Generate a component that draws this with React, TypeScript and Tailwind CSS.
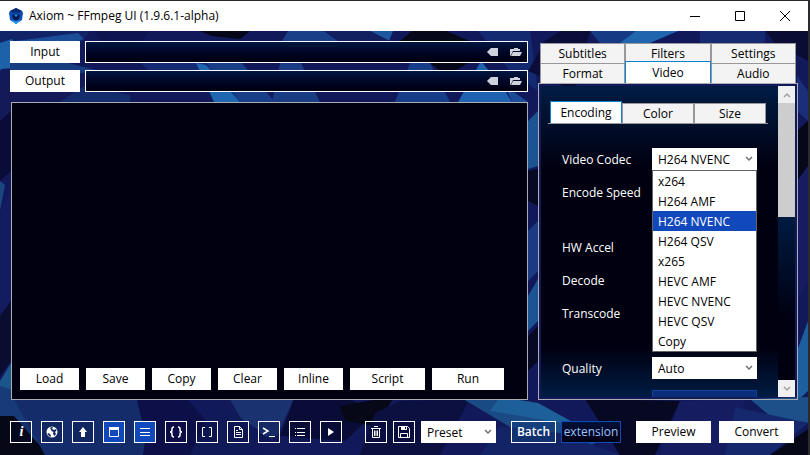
import { useState } from 'react';
import type { ReactNode } from 'react';

const TOP_TABS = ['Subtitles', 'Filters', 'Settings'];
const BOTTOM_TABS = ['Format', 'Video', 'Audio'];
const SUB_TABS = ['Encoding', 'Color', 'Size'];
const CODECS = ['x264', 'H264 AMF', 'H264 NVENC', 'H264 QSV', 'x265', 'HEVC AMF', 'HEVC NVENC', 'HEVC QSV', 'Copy'];

const SCRIPT_BUTTONS = [
  { label: 'Load', width: 'w-[59px]' },
  { label: 'Save', width: 'w-[59px]' },
  { label: 'Copy', width: 'w-[59px]' },
  { label: 'Clear', width: 'w-[59px]' },
  { label: 'Inline', width: 'w-[59px]' },
  { label: 'Script', width: 'w-[75px]' },
  { label: 'Run', width: 'w-[72px]' },
];

// Low-poly wallpaper facets: fill, points
const FACETS: [string, string][] = [
  ['#122468', '0,0 90,0 60,40 0,30'],
  ['#1a4c98', '0,12 78,2 84,8 8,32 0,40'],
  ['#1d62a8', '0,12 12,8 30,36 0,38'],
  ['#173c80', '10,32 60,30 100,40 60,44 10,42'],
  ['#141a58', '0,42 60,40 84,64 130,90 0,150'],
  ['#142c6c', '60,71 84,55 130,64 130,71'],
  ['#0d1450', '95,0 150,0 140,12 100,10'],
  ['#050618', '200,0 250,0 240,8 212,5'],
  ['#132a72', '140,32 200,30 220,40 150,40'],
  ['#1f66b0', '196,32 206,34 240,71 214,71'],
  ['#183e88', '206,32 240,30 275,71 240,71'],
  ['#183f88', '288,0 324,0 338,10 282,10'],
  ['#1e57a0', '370,0 393,0 389,10'],
  ['#193c84', '280,32 300,30 320,71 272,71'],
  ['#122060', '325,0 370,0 390,10 340,10'],
  ['#060718', '412,0 446,0 470,10 400,10'],
  ['#060718', '430,32 468,32 455,40 440,40'],
  ['#173c88', '410,32 430,32 450,71 395,71'],
  ['#1f62b0', '481,30 505,60 512,71 458,71'],
  ['#1c4c98', '505,55 528,71 512,71'],
  ['#132a70', '478,0 530,0 538,60 510,40'],
  ['#0a0d38', '528,40 545,10 560,0 590,0 575,60'],
  ['#173a84', '590,0 640,0 625,12 600,12'],
  ['#2066ae', '636,0 678,0 650,12 620,12'],
  ['#152a70', '700,0 765,0 765,12 700,12'],
  ['#0b0c34', '765,0 808,0 808,30 775,12'],
  ['#1a2f78', '797,45 808,60 808,90 797,80'],
  ['#060718', '797,100 808,90 808,135 797,150'],
  ['#171c60', '797,150 808,135 808,250 797,270'],
  ['#1d5f9e', '797,320 808,290 808,360 797,370'],
  ['#0a0c38', '0,90 11,80 11,140 0,150'],
  ['#1b4680', '0,150 5,154 0,180'],
  ['#141c60', '0,180 11,160 11,290 0,280'],
  ['#0a0c30', '0,285 11,270 11,330 0,345'],
  ['#1b558c', '0,350 11,332 11,390 0,380'],
  ['#1b5490', '528,90 538,80 538,135 528,138'],
  ['#070922', '528,140 538,138 538,175 528,170'],
  ['#1b3a80', '528,200 538,190 538,240 528,250'],
  ['#1b5490', '528,265 538,248 538,290 528,300'],
  ['#070922', '528,305 538,295 538,330 528,340'],
  ['#173a78', '0,355 30,365 55,424 0,385'],
  ['#060818', '0,385 14,385 48,424 0,424'],
  ['#142c6a', '12,365 136,365 146,406 143,424 45,424'],
  ['#0d1048', '136,365 185,365 215,400 190,424 143,424 146,406'],
  ['#1a3270', '228,365 295,365 275,410 245,395'],
  ['#111a58', '215,370 260,400 250,424 190,424'],
  ['#0a0c38', '295,365 345,365 375,382 345,410 280,405'],
  ['#060818', '340,375 395,365 375,395 345,390'],
  ['#121a5c', '275,405 345,410 365,424 260,424'],
  ['#0c1040', '375,382 400,370 470,368 440,424 360,424'],
  ['#1a4a84', '463,368 528,370 600,410 570,424 520,402'],
  ['#1d5f98', '500,366 538,372 580,395 490,380'],
  ['#132466', '500,395 560,402 620,424 480,424'],
  ['#070922', '585,368 680,370 655,424 620,424'],
  ['#151c60', '680,370 745,368 730,424 660,424'],
  ['#1d5088', '750,368 808,366 808,392 770,385'],
  ['#16286c', '735,376 808,392 770,424 725,424'],
  ['#060818', '770,424 808,398 808,424'],
];

function Wallpaper() {
  return (
    <svg
      className="absolute inset-0 h-full w-full"
      viewBox="0 0 808 424"
      preserveAspectRatio="none"
      aria-hidden="true"
    >
      <rect width="808" height="424" fill="#11195a" />
      {FACETS.map(([fill, points]) => (
        <polygon key={points} points={points} fill={fill} />
      ))}
    </svg>
  );
}

function AppLogo() {
  return (
    <svg width="16" height="16" viewBox="0 0 16 16" aria-hidden="true">
      <path d="M8 0l6 3 1 2-1 7-6 4-6-4L1 5l1-2z" fill="#0b4fb8" />
      <path d="M8 0l6 3-3 2-3-1-3 1-3-2z" fill="#0a2a70" />
      <path d="M8 5l4 2-1 4-3 2-3-2-1-4z" fill="#061a50" />
      <path d="M8 6l2 1-2 2-2-2z" fill="#1b86e8" />
      <path d="M3 12l5 1 5-1-5 4z" fill="#2196f3" />
    </svg>
  );
}

function Chevron({ className = '' }: { className?: string }) {
  return (
    <svg className={className} width="8" height="6" viewBox="0 0 8 6" fill="none" stroke="currentColor" strokeWidth="1.5" aria-hidden="true">
      <path d="M1 1l3 3 3-3" />
    </svg>
  );
}

function Icon({ children }: { children: ReactNode }) {
  return (
    <svg width="14" height="14" viewBox="0 0 14 14" fill="none" stroke="currentColor" aria-hidden="true">
      {children}
    </svg>
  );
}

const TOOLS: { name: string; active?: boolean; icon: ReactNode }[] = [
  { name: 'Info', icon: <span className="pl-px font-['Liberation_Serif',serif] text-sm font-bold italic">i</span> },
  {
    name: 'Website',
    icon: (
      <Icon>
        <circle cx="7" cy="7" r="5.5" fill="currentColor" stroke="none" />
        <path d="M5 2.5l3-.5-1 2 2 1 2-1 .5 1.500L10 7l1 2-1.500 2L8 9 8.500 7 6.500 6z" fill="#132a68" stroke="none" />
        <path d="M2.500 8l2 .5 1.500 2-.5 1.500-2-1.500z" fill="#132a68" stroke="none" />
      </Icon>
    ),
  },
  { name: 'Update', icon: <Icon><path d="M7 2l4 5H9v5H5V7H3z" fill="currentColor" stroke="none" /></Icon> },
  { name: 'Window', active: true, icon: <Icon><path d="M2.5 2.5h9v9h-9z" /><path d="M2 2h10v3H2z" fill="currentColor" stroke="none" /></Icon> },
  { name: 'Lines', active: true, icon: <Icon><path d="M2 3.5h10M2 7.5h10M2 10.5h10" /></Icon> },
  {
    name: 'Braces',
    icon: (
      <Icon>
        <path d="M5 2Q3 2 3 4v1q0 2-2 2 2 0 2 2v1q0 2 2 2M9 2q2 0 2 2v1q0 2 2 2-2 0-2 2v1q0 2-2 2" strokeWidth="1.5" />
      </Icon>
    ),
  },
  { name: 'Brackets', icon: <Icon><path d="M5 2.5H2.5v9H5M9 2.5h2.5v9H9" /></Icon> },
  { name: 'Log', icon: <Icon><path d="M3.5 1.5h5l3 3v8h-8zM8.5 1.500v3h3M5 5.5h2M5 7.5h5M5 9.5h5" /></Icon> },
  { name: 'Terminal', icon: <Icon><path d="M1 3l5 3-5 3" strokeWidth="1.5" /><path d="M7 11.5h6" /></Icon> },
  { name: 'List', icon: <Icon><path d="M2 3.5h1M2 7.5h1M2 10.5h1M4 3.5h8M4 7.5h8M4 10.5h8" /></Icon> },
  { name: 'Play', icon: <Icon><path d="M4 3l6 4-6 4z" fill="currentColor" stroke="none" /></Icon> },
];

function ToolButton({ name, active = false, children }: { name: string; active?: boolean; children: ReactNode }) {
  return (
    <button
      aria-label={name}
      className={`flex size-[22px] shrink-0 items-center justify-center border border-white leading-none text-white ${active ? 'bg-[#1149bd]' : 'bg-[#060c38]/20'}`}
    >
      {children}
    </button>
  );
}

function WhiteButton({ className, children }: { className: string; children: ReactNode }) {
  return <button className={`h-[22px] shrink-0 bg-white text-center ${className}`}>{children}</button>;
}

function PathRow({ label, id }: { label: string; id: string }) {
  return (
    <div className="flex items-center gap-[5px]">
      <WhiteButton className="w-[70px]">{label}</WhiteButton>
      <div className="flex h-[22px] flex-1 items-center gap-3 border border-white bg-linear-to-b from-[#001640] to-[#000010] pr-[5px] text-[#cfd2da]">
        <input id={id} aria-label={label} className="min-w-0 flex-1 bg-transparent px-1 text-white outline-none" />
        <button aria-label={`Clear ${label}`}>
          <svg width="11" height="8" viewBox="0 0 11 8" aria-hidden="true">
            <path d="M4 0h7v8H4L0 4z" fill="currentColor" />
          </svg>
        </button>
        <button aria-label={`Browse ${label}`}>
          <svg width="12" height="8" viewBox="0 0 12 8" aria-hidden="true">
            <path d="M0 8V1h4V0h4v1h2v2H3L1 7z" fill="currentColor" />
            <path d="M3 4h9l-2 4H1z" fill="currentColor" />
          </svg>
        </button>
      </div>
    </div>
  );
}

function Tab({ label, active, onClick }: { label: string; active: boolean; onClick?: () => void }) {
  return (
    <button
      role="tab"
      aria-selected={active}
      onClick={onClick}
      className={
        active
          ? 'z-10 -mt-0.5 flex-1 border border-b-0 border-[#0a84d0] bg-white'
          : 'flex-1 border border-b-0 border-[#97979c] bg-[#f3f3f3]'
      }
    >
      {label}
    </button>
  );
}

function SelectBox({ id, options = [], value, onChange, label }: {
  id: string;
  options?: string[];
  value?: string;
  onChange?: (v: string) => void;
  label?: string;
}) {
  return (
    <div className="relative h-[22px] w-full bg-white text-black">
      <select
        id={id}
        aria-label={label}
        value={value}
        onChange={e => onChange?.(e.target.value)}
        className="block h-full w-full appearance-none bg-transparent pt-0.5 pr-4 pl-1.5 outline-none"
      >
        {options.map(o => (
          <option key={o}>{o}</option>
        ))}
      </select>
      <Chevron className="pointer-events-none absolute top-2 right-1 text-[#707070]" />
    </div>
  );
}

function Field({ label, id, children }: { label: string; id: string; children?: ReactNode }) {
  return (
    <div className="flex h-[22px] items-center">
      <label htmlFor={id} className="w-[90px] shrink-0 pt-0.5">{label}</label>
      <div className="relative w-[105px]">{children ?? <SelectBox id={id} />}</div>
    </div>
  );
}

function VideoPanel() {
  const [codec, setCodec] = useState('H264 NVENC');
  const [subTab, setSubTab] = useState('Encoding');

  return (
    <div className="h-0 min-h-full flex-1 overflow-hidden bg-[linear-gradient(#001c44,#000010_26%,#000010_84%,#001c44)] pt-[17px] pr-2.5 pl-[7px] text-white">
      <div role="tablist" className="flex h-[21px] border-b border-[#97979c] px-0.5 text-black">
        {SUB_TABS.map(t => (
          <Tab key={t} label={t} active={t === subTab} onClick={() => setSubTab(t)} />
        ))}
      </div>

      <div className="flex flex-col gap-[33px] pt-6 pl-3.5">
        <div className="flex flex-col gap-[11px]">
          <Field label="Video Codec" id="codec">
            <SelectBox id="codec" options={CODECS} value={codec} onChange={setCodec} />
            <ul role="listbox" aria-label="Video Codec" className="absolute top-full left-0 z-20 w-full border border-[#646464] bg-white text-black">
              {CODECS.map(c => (
                <li
                  key={c}
                  role="option"
                  aria-selected={c === codec}
                  onClick={() => setCodec(c)}
                  className={`h-5 pl-[5px] leading-[22px] ${c === codec ? 'bg-[#1149bd] text-white' : ''}`}
                >
                  {c}
                </li>
              ))}
            </ul>
          </Field>
          <Field label="Encode Speed" id="speed" />
        </div>
        <div className="flex flex-col gap-[11px]">
          <Field label="HW Accel" id="hwaccel" />
          <Field label="Decode" id="decode" />
          <Field label="Transcode" id="transcode" />
        </div>
        <div className="flex flex-col gap-[11px]">
          <Field label="Quality" id="quality">
            <SelectBox id="quality" options={['Auto']} />
          </Field>
          <div className="flex justify-end pr-[11px]">
            <input aria-label="Quality value" className="h-[22px] w-[105px] border border-[#0f3f9c] bg-[#0b2c78]" />
          </div>
        </div>
      </div>
    </div>
  );
}

function ScrollBar() {
  return (
    <div className="flex w-[17px] shrink-0 flex-col bg-[linear-gradient(#001c44_40%,#000010_75%)] text-[#a0a0a0]">
      <button aria-label="Scroll up" className="flex h-[17px] items-center justify-center bg-[#f0f0f0]">
        <Chevron className="rotate-180" />
      </button>
      <div className="h-[114px] bg-[#cdcdcd]" />
      <button aria-label="Scroll down" className="mt-auto flex h-[17px] items-center justify-center bg-[#f0f0f0]">
        <Chevron />
      </button>
    </div>
  );
}

export default function App() {
  const [tab, setTab] = useState('Video');

  return (
    <div className="flex min-h-screen flex-col border-t border-r-2 border-[#2b2b2d] bg-[#11195a] font-['Open_Sans','Noto_Sans',sans-serif] text-xs text-black">
      <header className="flex h-[30px] items-center bg-white pl-2">
        <AppLogo />
        <h1 className="flex-1 pl-[5px]">Axiom ~ FFmpeg UI (1.9.6.1-alpha)</h1>
        <div className="flex gap-[35px] pr-[18px]">
          <button aria-label="Minimize">
            <svg width="10" height="10" viewBox="0 0 10 10" stroke="#000"><path d="M0 5.5h10" /></svg>
          </button>
          <button aria-label="Maximize">
            <svg width="10" height="10" viewBox="0 0 10 10" fill="none" stroke="#000"><path d="M.5.5h9v9h-9z" /></svg>
          </button>
          <button aria-label="Close">
            <svg width="10" height="10" viewBox="0 0 10 10" stroke="#000"><path d="M0 0l10 10M10 0L0 10" /></svg>
          </button>
        </div>
      </header>

      <main className="relative flex flex-1 flex-col">
        <Wallpaper />
        <div className="relative flex flex-1 gap-2.5 px-2.5 pt-2.5">
          <section className="flex flex-1 flex-col">
            <div className="flex flex-col gap-[7px]">
              <PathRow label="Input" id="input" />
              <PathRow label="Output" id="output" />
            </div>
            <div className="mt-2.5 ml-px flex flex-1 flex-col border border-[#abadb3] bg-[#000010] px-2 pb-[9px]">
              <textarea aria-label="Script" className="w-full flex-1 resize-none bg-transparent pt-2 text-white outline-none" />
              <div className="flex gap-[7px]">
                {SCRIPT_BUTTONS.map(b => (
                  <WhiteButton key={b.label} className={b.width}>{b.label}</WhiteButton>
                ))}
              </div>
            </div>
          </section>

          <section className="flex w-[260px] flex-col pt-0.5">
            <div role="tablist" className="px-0.5">
              <div className="flex h-5">
                {TOP_TABS.map(t => (
                  <Tab key={t} label={t} active={t === tab} onClick={() => setTab(t)} />
                ))}
              </div>
              <div className="flex h-5">
                {BOTTOM_TABS.map(t => (
                  <Tab key={t} label={t} active={t === tab} onClick={() => setTab(t)} />
                ))}
              </div>
            </div>
            <div className="flex flex-1 border border-[#abadb3] p-0.5">
              <VideoPanel />
              <ScrollBar />
            </div>
          </section>
        </div>

        <footer className="relative flex items-center gap-[15px] px-2.5 pt-[21px] pb-3">
          <div className="flex gap-[9px] pr-2">
            {TOOLS.map(t => (
              <ToolButton key={t.name} name={t.name} active={t.active}>{t.icon}</ToolButton>
            ))}
          </div>
          <div className="flex gap-1.5">
            <ToolButton name="Delete preset">
              <Icon><path d="M5 1.5h4M2 3.5h10M3.5 4v8.5h7V4M5.5 5.5V11M7 5.5V11M8.5 5.5V11" /></Icon>
            </ToolButton>
            <ToolButton name="Save preset">
              <Icon>
                <path d="M1.5 1.5h9l2 2v9h-11zM3.5 12V8.5h7V12" />
                <path d="M4 1h6v4H4z" fill="currentColor" stroke="none" />
                <path d="M8.5 2v2" stroke="#0a1040" />
              </Icon>
            </ToolButton>
            <div className="w-[75px]">
              <SelectBox id="preset" label="Preset" options={['Preset']} />
            </div>
          </div>
          <div className="flex gap-[5px]">
            <button className="h-[22px] w-[45px] border border-white bg-[#123a78]/60 font-semibold text-white">Batch</button>
            <input
              aria-label="Batch extension"
              defaultValue="extension"
              className="h-[22px] w-[60px] border border-[#1149bd] bg-linear-to-b from-[#001238] to-[#000012] pb-0.5 text-center text-[#9cc4f8] outline-none"
            />
          </div>
          <div className="flex gap-2">
            <WhiteButton className="w-[75px]">Preview</WhiteButton>
            <WhiteButton className="w-[75px]">Convert</WhiteButton>
          </div>
        </footer>
      </main>
    </div>
  );
}
